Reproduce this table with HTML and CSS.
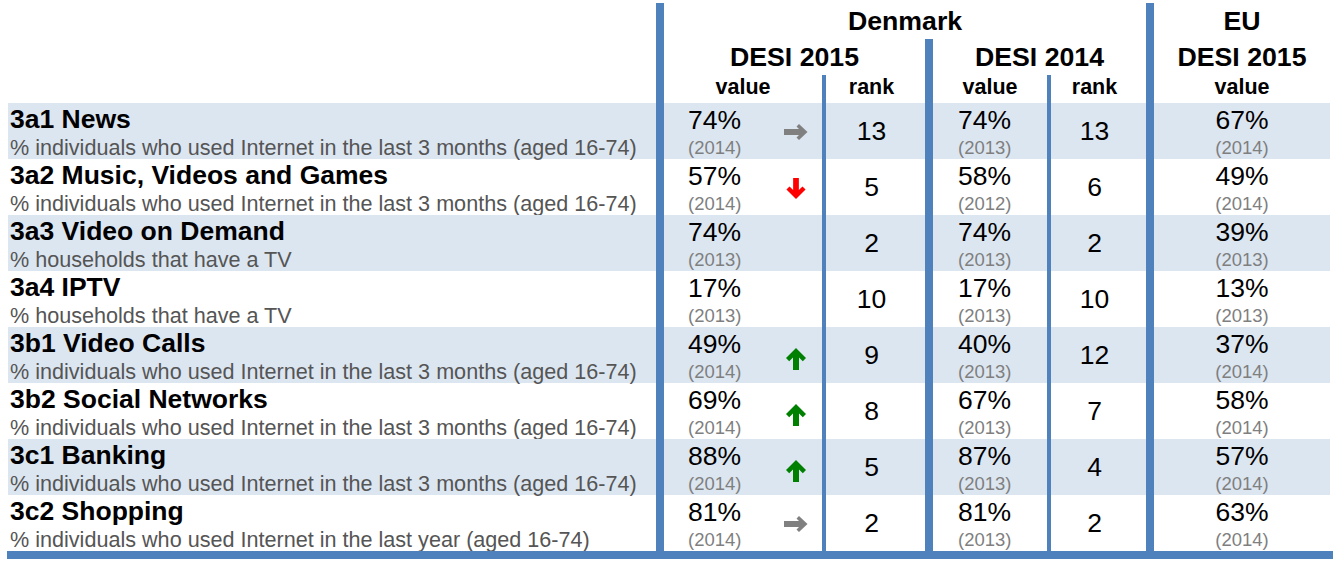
FILE: index.html
```html
<!DOCTYPE html>
<html lang="en">
<head>
<meta charset="utf-8">
<title>DESI Denmark</title>
<link rel="stylesheet" href="styles.css">
</head>
<body>
<div class="page">
  <div class="desi">
    <div class="bar bar-dk"></div>
    <div class="bar bar-d14"></div>
    <div class="bar thin thin-1"></div>
    <div class="bar thin thin-2"></div>
    <div class="bar bar-eu"></div>

    <div class="corner"></div>
    <div class="h1 h-dk">Denmark</div>
    <div class="h1 h-eu">EU</div>
    <div class="h1 h-d15">DESI 2015</div>
    <div class="h1 h-d14">DESI 2014</div>
    <div class="h1 h-eu15">DESI 2015</div>
    <div class="h3 c-v1">value</div>
    <div class="h3 c-r1">rank</div>
    <div class="h3 c-v2">value</div>
    <div class="h3 c-r2">rank</div>
    <div class="h3 c-v3">value</div>

    <!-- row 1 -->
    <div class="cell label shade"><div class="title">3a1 News</div><div class="sub">% individuals who used Internet in the last 3 months (aged 16-74)</div></div>
    <div class="cell val shade"><div class="num"><div class="pct">74%</div><div class="yr">(2014)</div></div><span class="arrow"><svg width="24" height="16" viewBox="0 0 24 16"><polygon fill="#808080" points="0,5 15,5 12.5,2.5 15,0 23.5,8 15,16 12.5,13.5 15,11 0,11"/></svg></span></div>
    <div class="cell rank shade">13</div>
    <div class="cell val v2 shade"><div class="num"><div class="pct">74%</div><div class="yr">(2013)</div></div></div>
    <div class="cell rank shade">13</div>
    <div class="cell eu shade"><div class="pct">67%</div><div class="yr">(2014)</div></div>

    <!-- row 2 -->
    <div class="cell label"><div class="title">3a2 Music, Videos and Games</div><div class="sub">% individuals who used Internet in the last 3 months (aged 16-74)</div></div>
    <div class="cell val"><div class="num"><div class="pct">57%</div><div class="yr">(2014)</div></div><span class="arrow"><svg width="20" height="21" viewBox="0 0 20 22"><polygon fill="#ff0000" points="10,22 20,12 16.8,8.8 13,12.6 13,0 7,0 7,12.6 3.2,8.8 0,12"/></svg></span></div>
    <div class="cell rank">5</div>
    <div class="cell val v2"><div class="num"><div class="pct">58%</div><div class="yr">(2012)</div></div></div>
    <div class="cell rank">6</div>
    <div class="cell eu"><div class="pct">49%</div><div class="yr">(2014)</div></div>

    <!-- row 3 -->
    <div class="cell label shade"><div class="title">3a3 Video on Demand</div><div class="sub">% households that have a TV</div></div>
    <div class="cell val shade"><div class="num"><div class="pct">74%</div><div class="yr">(2013)</div></div></div>
    <div class="cell rank shade">2</div>
    <div class="cell val v2 shade"><div class="num"><div class="pct">74%</div><div class="yr">(2013)</div></div></div>
    <div class="cell rank shade">2</div>
    <div class="cell eu shade"><div class="pct">39%</div><div class="yr">(2013)</div></div>

    <!-- row 4 -->
    <div class="cell label"><div class="title">3a4 IPTV</div><div class="sub">% households that have a TV</div></div>
    <div class="cell val"><div class="num"><div class="pct">17%</div><div class="yr">(2013)</div></div></div>
    <div class="cell rank">10</div>
    <div class="cell val v2"><div class="num"><div class="pct">17%</div><div class="yr">(2013)</div></div></div>
    <div class="cell rank">10</div>
    <div class="cell eu"><div class="pct">13%</div><div class="yr">(2013)</div></div>

    <!-- row 5 -->
    <div class="cell label shade"><div class="title">3b1 Video Calls</div><div class="sub">% individuals who used Internet in the last 3 months (aged 16-74)</div></div>
    <div class="cell val shade"><div class="num"><div class="pct">49%</div><div class="yr">(2014)</div></div><span class="arrow up"><svg width="20" height="22" viewBox="0 0 20 22"><polygon fill="#008000" points="10,0 20,10 16.8,13.2 13,9.4 13,22 7,22 7,9.4 3.2,13.2 0,10"/></svg></span></div>
    <div class="cell rank shade">9</div>
    <div class="cell val v2 shade"><div class="num"><div class="pct">40%</div><div class="yr">(2013)</div></div></div>
    <div class="cell rank shade">12</div>
    <div class="cell eu shade"><div class="pct">37%</div><div class="yr">(2014)</div></div>

    <!-- row 6 -->
    <div class="cell label"><div class="title">3b2 Social Networks</div><div class="sub">% individuals who used Internet in the last 3 months (aged 16-74)</div></div>
    <div class="cell val"><div class="num"><div class="pct">69%</div><div class="yr">(2014)</div></div><span class="arrow up"><svg width="20" height="22" viewBox="0 0 20 22"><polygon fill="#008000" points="10,0 20,10 16.8,13.2 13,9.4 13,22 7,22 7,9.4 3.2,13.2 0,10"/></svg></span></div>
    <div class="cell rank">8</div>
    <div class="cell val v2"><div class="num"><div class="pct">67%</div><div class="yr">(2013)</div></div></div>
    <div class="cell rank">7</div>
    <div class="cell eu"><div class="pct">58%</div><div class="yr">(2014)</div></div>

    <!-- row 7 -->
    <div class="cell label shade"><div class="title">3c1 Banking</div><div class="sub">% individuals who used Internet in the last 3 months (aged 16-74)</div></div>
    <div class="cell val shade"><div class="num"><div class="pct">88%</div><div class="yr">(2014)</div></div><span class="arrow up"><svg width="20" height="22" viewBox="0 0 20 22"><polygon fill="#008000" points="10,0 20,10 16.8,13.2 13,9.4 13,22 7,22 7,9.4 3.2,13.2 0,10"/></svg></span></div>
    <div class="cell rank shade">5</div>
    <div class="cell val v2 shade"><div class="num"><div class="pct">87%</div><div class="yr">(2013)</div></div></div>
    <div class="cell rank shade">4</div>
    <div class="cell eu shade"><div class="pct">57%</div><div class="yr">(2014)</div></div>

    <!-- row 8 -->
    <div class="cell label"><div class="title">3c2 Shopping</div><div class="sub">% individuals who used Internet in the last year (aged 16-74)</div></div>
    <div class="cell val"><div class="num"><div class="pct">81%</div><div class="yr">(2014)</div></div><span class="arrow"><svg width="24" height="16" viewBox="0 0 24 16"><polygon fill="#808080" points="0,5 15,5 12.5,2.5 15,0 23.5,8 15,16 12.5,13.5 15,11 0,11"/></svg></span></div>
    <div class="cell rank">2</div>
    <div class="cell val v2"><div class="num"><div class="pct">81%</div><div class="yr">(2013)</div></div></div>
    <div class="cell rank">2</div>
    <div class="cell eu"><div class="pct">63%</div><div class="yr">(2014)</div></div>

    <div class="bottom"></div>
  </div>
</div>
</body>
</html>
```

FILE: styles.css
```css
html, body {
  margin: 0;
  padding: 0;
  background: #ffffff;
}

body {
  font-family: "Liberation Sans", Arial, sans-serif;
  color: #000000;
}

.page {
  padding: 3px 0 0 8px;
}

.desi {
  display: grid;
  width: 1322px;
  grid-template-columns: 648px 8px 158px 4px 99px 8px 114px 4px 95px 8px 176px;
  grid-template-rows: 36px 36px 28px repeat(8, 56px) 8px;
}

.bar {
  background: #4f81bd;
}

.bar-dk { grid-column: 2; grid-row: 1 / 12; }
.bar-d14 { grid-column: 6; grid-row: 2 / 12; }
.thin-1 { grid-column: 4; grid-row: 3 / 12; }
.thin-2 { grid-column: 8; grid-row: 3 / 12; }
.bar-eu { grid-column: 10; grid-row: 1 / 12; }

.corner { grid-column: 1; grid-row: 1 / 4; }

.h1 {
  font-weight: bold;
  font-size: 26.7px;
  line-height: 36px;
  text-align: center;
}

.h-dk { grid-column: 3 / 10; grid-row: 1; }
.h-eu { grid-column: 11; grid-row: 1; }
.h-d15 { grid-column: 3 / 6; grid-row: 2; }
.h-d14 { grid-column: 7 / 10; grid-row: 2; }
.h-eu15 { grid-column: 11; grid-row: 2; }

.h3 {
  font-weight: bold;
  font-size: 21.5px;
  line-height: 24px;
  text-align: center;
  grid-row: 3;
}

.c-v1 { grid-column: 3; }
.c-r1 { grid-column: 5; padding-right: 8px; }
.c-v2 { grid-column: 7; }
.c-r2 { grid-column: 9; padding-right: 8px; }
.c-v3 { grid-column: 11; }

.cell {
  box-sizing: border-box;
}

.shade {
  background: #dce6f1;
}

.label {
  padding: 1px 0 0 2px;
  white-space: nowrap;
}

.title {
  font-weight: bold;
  font-size: 26.5px;
  line-height: 30px;
}

.sub {
  font-size: 21.6px;
  line-height: 24px;
  margin-top: 2px;
  color: #555555;
}

.val {
  display: flex;
  justify-content: space-between;
  align-items: flex-start;
  padding: 3px 14px 0 24px;
}

.val.v2 {
  padding-left: 25px;
}

.pct {
  font-size: 26.5px;
  line-height: 28px;
}

.yr {
  font-size: 18.5px;
  line-height: 24px;
  margin-top: 2px;
  color: #7f7f7f;
}

.arrow {
  align-self: center;
  width: 24px;
  display: flex;
  justify-content: center;
  margin-top: -1px;
}

.arrow.up {
  margin-top: 4px;
}

.arrow svg {
  display: block;
}

.rank {
  display: flex;
  align-items: center;
  justify-content: center;
  font-size: 26.5px;
  padding-right: 8px;
}

.eu {
  text-align: center;
  padding-top: 3px;
}

.bottom {
  grid-column: 1 / -1;
  grid-row: 12;
  background: #4f81bd;
  margin: 0 -3px 0 -1px;
}
```
